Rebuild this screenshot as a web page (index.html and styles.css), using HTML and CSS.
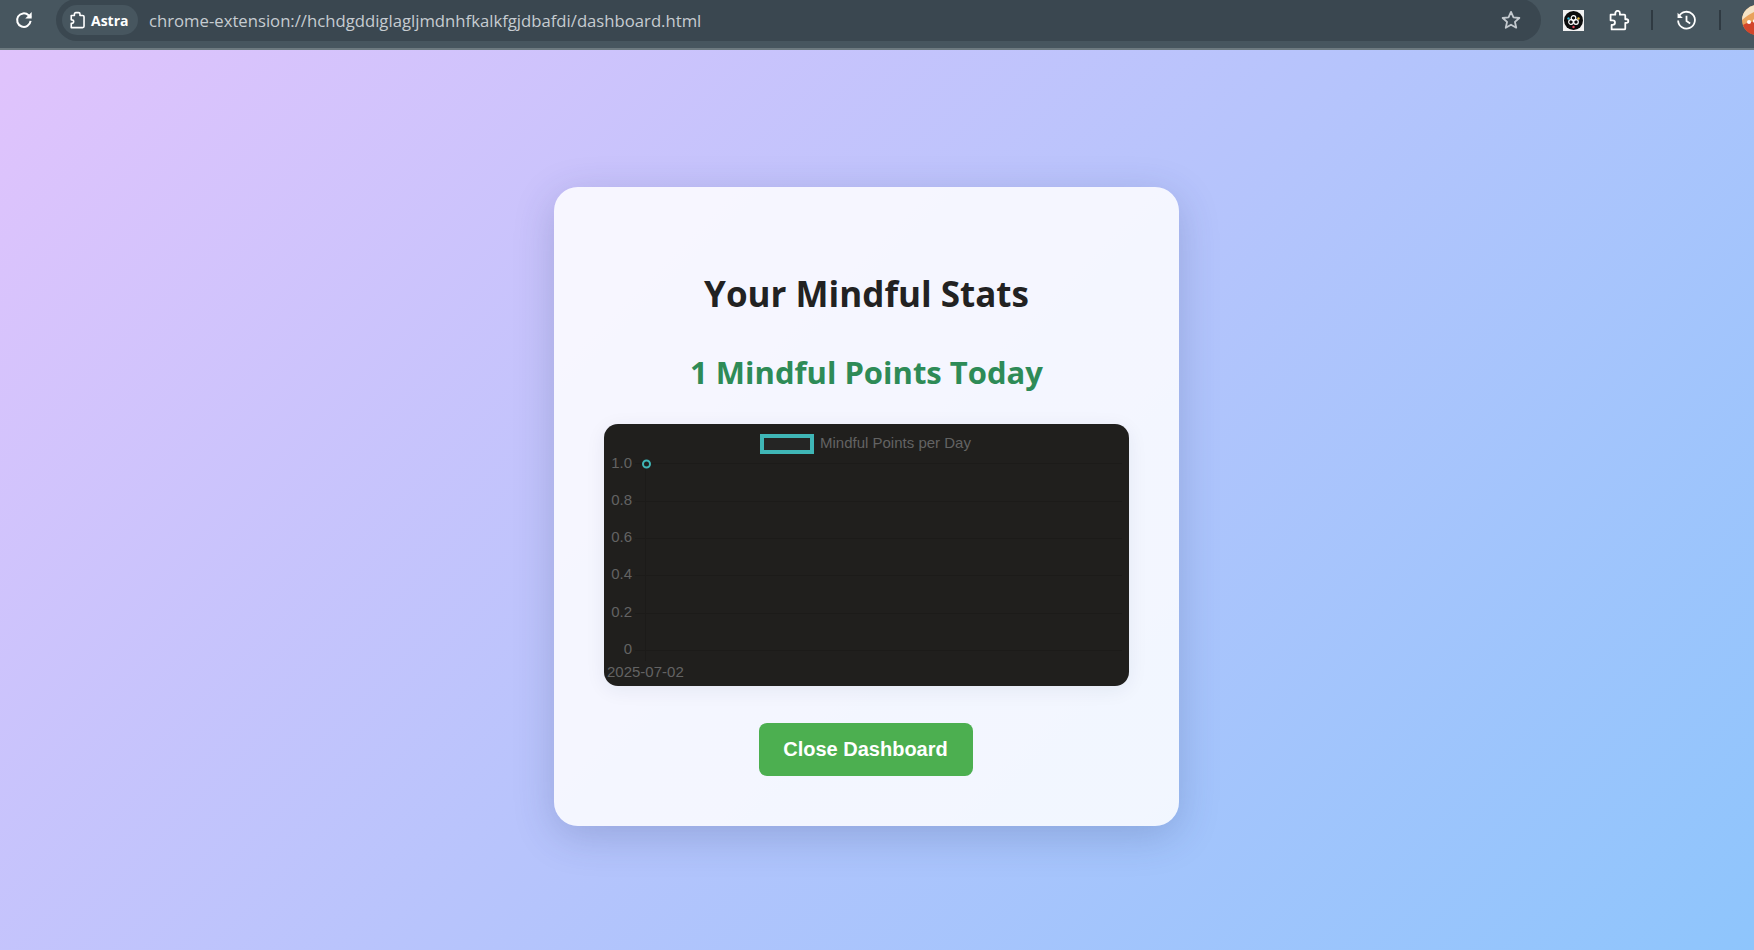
FILE: index.html
```html
<!DOCTYPE html>
<html lang="en">
<head>
<meta charset="utf-8">
<title>Your Mindful Stats</title>
<link rel="stylesheet" href="styles.css">
</head>
<body>
<header class="toolbar">
  <svg class="ic-reload" viewBox="0 0 24 24" width="22" height="22"><path d="M19.2 13a7.4 7.4 0 1 1-2.2-6.2L19.4 9" fill="none" stroke="#fff" stroke-width="2.2"/><path d="M20.4 3.4v7h-7z" fill="#fff"/></svg>
  <div class="omnibox">
    <div class="chip">
      <svg class="ic-chip" viewBox="0 0 20 20" width="18" height="20"><path d="M2.500 5H6V3.400a1.600 1.600 0 0 1 1.600-1.600h3a1.600 1.600 0 0 1 1.600 1.600V5h3a1.500 1.500 0 0 1 1.500 1.500V17a1.500 1.500 0 0 1-1.500 1.500H2.500v-4.700h.7a2 2 0 0 0 0-4h-.7z" fill="none" stroke="#fff" stroke-width="1.800" stroke-linejoin="round"/></svg>
      <span class="chip-label">Astra</span>
    </div>
    <span class="url">chrome-extension://hchdgddiglagljmdnhfkalkfgjdbafdi/dashboard.html</span>
    <svg class="ic-star" viewBox="0 0 24 24" width="22" height="22"><path d="M12 3.200l2.700 5.900 6.400.7-4.800 4.300 1.400 6.300L12 17.200l-5.700 3.200 1.400-6.300-4.800-4.300 6.400-.7z" fill="none" stroke="#c3c9ce" stroke-width="2" stroke-linejoin="round"/></svg>
  </div>
  <svg class="ic-badge" viewBox="0 0 21 21" width="21" height="21">
    <rect width="21" height="21" fill="#f2f2f2"/>
    <circle cx="10.500" cy="10.500" r="9.500" fill="#0b0b0b"/>
    <circle cx="10.500" cy="8" r="2.300" fill="none" stroke="#fff" stroke-width="1.200"/>
    <circle cx="8" cy="12" r="2.300" fill="none" stroke="#fff" stroke-width="1.200"/>
    <circle cx="13" cy="12" r="2.300" fill="none" stroke="#fff" stroke-width="1.200"/>
    <circle cx="5.500" cy="8.500" r="1.200" fill="#2fb6d8"/>
    <circle cx="15.500" cy="8.500" r="1.200" fill="#f0c040"/>
    <circle cx="10.500" cy="17" r="1.200" fill="#e8455a"/>
  </svg>
  <svg class="ic-puzzle" viewBox="0 0 20 20" width="21" height="21"><path d="M1.500 4.500H6V3a2.200 2.200 0 0 1 4.400 0v1.500h4.100a1 1 0 0 1 1 1v3.300h1.200a1.700 1.700 0 0 1 0 3.400h-1.200v5.300a1 1 0 0 1-1 1H2.500v-4.300h1a2.200 2.200 0 0 0 0-4.400h-2z" fill="none" stroke="#fff" stroke-width="1.700" stroke-linejoin="round"/></svg>
  <span class="sep sep-first"></span>
  <svg class="ic-history" viewBox="0 0 20 20" width="21" height="21"><path d="M2.800 6.200A8 8 0 1 1 2 10" fill="none" stroke="#fff" stroke-width="1.700"/><path d="M1.500 2.500v5h5z" fill="#fff"/><path d="M10 5.500V10.500l3.500 2.300" fill="none" stroke="#fff" stroke-width="1.700"/></svg>
  <span class="sep sep-second"></span>
  <svg class="ic-avatar" viewBox="0 0 30 30" width="30" height="30">
    <circle cx="15" cy="15" r="15" fill="#e9a25c"/>
    <path d="M0 15a15 15 0 0 1 15-15c5 0 9 2 12 6-6-3-16-1-27 9z" fill="#f4e3c6"/>
    <path d="M1 20c6-4 17-5 28-3-1 7-7 13-14 13S3 26 1 20z" fill="#d2452b"/>
    <circle cx="7" cy="17" r="2" fill="#fff"/><circle cx="13" cy="16" r="2" fill="#fff"/>
  </svg>
</header>
<main class="page">
  <section class="card">
    <h1 class="title">Your Mindful Stats</h1>
    <h2 class="points">1 Mindful Points Today</h2>
    <div class="chart">
      <svg class="chart-svg" viewBox="0 0 525 262" width="525" height="262">
        <g class="grid">
          <line x1="31" x2="518" y1="39.500" y2="39.500"/>
          <line x1="31" x2="518" y1="77.500" y2="77.500"/>
          <line x1="31" x2="518" y1="114.500" y2="114.500"/>
          <line x1="31" x2="518" y1="151.500" y2="151.500"/>
          <line x1="31" x2="518" y1="189.500" y2="189.500"/>
          <line x1="31" x2="518" y1="226.500" y2="226.500"/>
          <line x1="41.500" x2="41.500" y1="39" y2="237"/>
        </g>
        <rect class="legend-box" x="158" y="12" width="50" height="16"/>
        <text class="label" x="216" y="24">Mindful Points per Day</text>
        <g class="ticks">
          <text class="label" x="28" y="44">1.0</text>
          <text class="label" x="28" y="81">0.8</text>
          <text class="label" x="28" y="118">0.6</text>
          <text class="label" x="28" y="155">0.4</text>
          <text class="label" x="28" y="193">0.2</text>
          <text class="label" x="28" y="230">0</text>
        </g>
        <text class="label" x="3" y="253">2025-07-02</text>
        <circle class="dot" cx="42.500" cy="40" r="3.500"/>
      </svg>
    </div>
    <button class="close-btn" type="button">Close Dashboard</button>
  </section>
</main>
</body>
</html>
```
FILE: styles.css
```css
* { box-sizing: border-box; }
html, body { margin: 0; height: 950px; overflow: hidden; }
body { font-family: "Open Sans", "Noto Sans", sans-serif; }

.toolbar {
  display: flex;
  align-items: center;
  height: 50px;
  padding-bottom: 8px;
  background: #47565f;
  border-bottom: 2px solid #6d7a80;
  overflow: hidden;
}
.ic-reload { margin-left: 13px; flex: none; }
.omnibox {
  display: flex;
  align-items: center;
  flex: none;
  width: 1485px;
  height: 42px;
  margin-left: 21px;
  padding-left: 6px;
  padding-right: 19px;
  background: #3a4750;
  border-radius: 21px;
}
.chip {
  display: flex;
  align-items: center;
  gap: 4px;
  width: 76px;
  height: 30px;
  padding-left: 7px;
  background: #47565f;
  border-radius: 15px;
  flex: none;
}
.ic-chip { flex: none; }
.chip-label { color: #fff; font-size: 14px; font-weight: 700; }
.url {
  margin-left: 11px;
  color: #c6ccd1;
  font-size: 16.700px;
  white-space: nowrap;
}
.ic-star { margin-left: auto; flex: none; }
.ic-badge { margin-left: 22px; flex: none; }
.ic-puzzle { margin-left: 25px; flex: none; }
.sep { width: 2px; height: 20px; background: #2f3a42; flex: none; }
.sep-first { margin-left: 21px; }
.ic-history { margin-left: 23px; flex: none; }
.sep-second { margin-left: 22px; }
.ic-avatar { margin-left: 21px; flex: none; }

.page {
  display: flex;
  justify-content: center;
  align-items: flex-start;
  height: 900px;
  padding-top: 137px;
  padding-right: 21px;
  background: linear-gradient(135deg, #e0c3fc 0%, #8ec5fc 100%);
}
.card {
  display: flex;
  flex-direction: column;
  align-items: center;
  width: 625px;
  height: 639px;
  padding: 50px;
  background: rgba(255, 255, 255, 0.85);
  border-radius: 24px;
  box-shadow: 0 10px 40px rgba(40, 60, 110, 0.22);
}
.title {
  margin: 34px 0 0;
  color: #222;
  font-size: 35px;
  line-height: 46px;
  font-weight: 700;
}
.points {
  margin: 35px 0 0;
  color: #2e8b57;
  font-size: 31px;
  line-height: 40px;
  font-weight: 700;
}
.chart {
  width: 525px;
  height: 262px;
  margin-top: 32px;
  background: #201f1d;
  border-radius: 14px;
  box-shadow: 0 4px 20px rgba(30, 40, 90, 0.07);
  overflow: hidden;
  flex: none;
}
.chart-svg { display: block; }
.grid line { stroke: #1c1b19; stroke-width: 1; }
.label { fill: #636363; font-family: "Liberation Sans", Arial, sans-serif; font-size: 15px; }
.ticks .label { text-anchor: end; }
.legend-box { fill: #252524; stroke: #3fb6b6; stroke-width: 4; }
.dot { fill: #201f1d; stroke: #3fb6b6; stroke-width: 2; }
.close-btn {
  width: 214px;
  height: 53px;
  margin-top: 37px;
  margin-right: 2px;
  padding: 0;
  border: 0;
  border-radius: 8px;
  background: #4caf50;
  color: #fff;
  font-family: "Liberation Sans", Arial, sans-serif;
  font-size: 20px;
  font-weight: 700;
  flex: none;
}
```
